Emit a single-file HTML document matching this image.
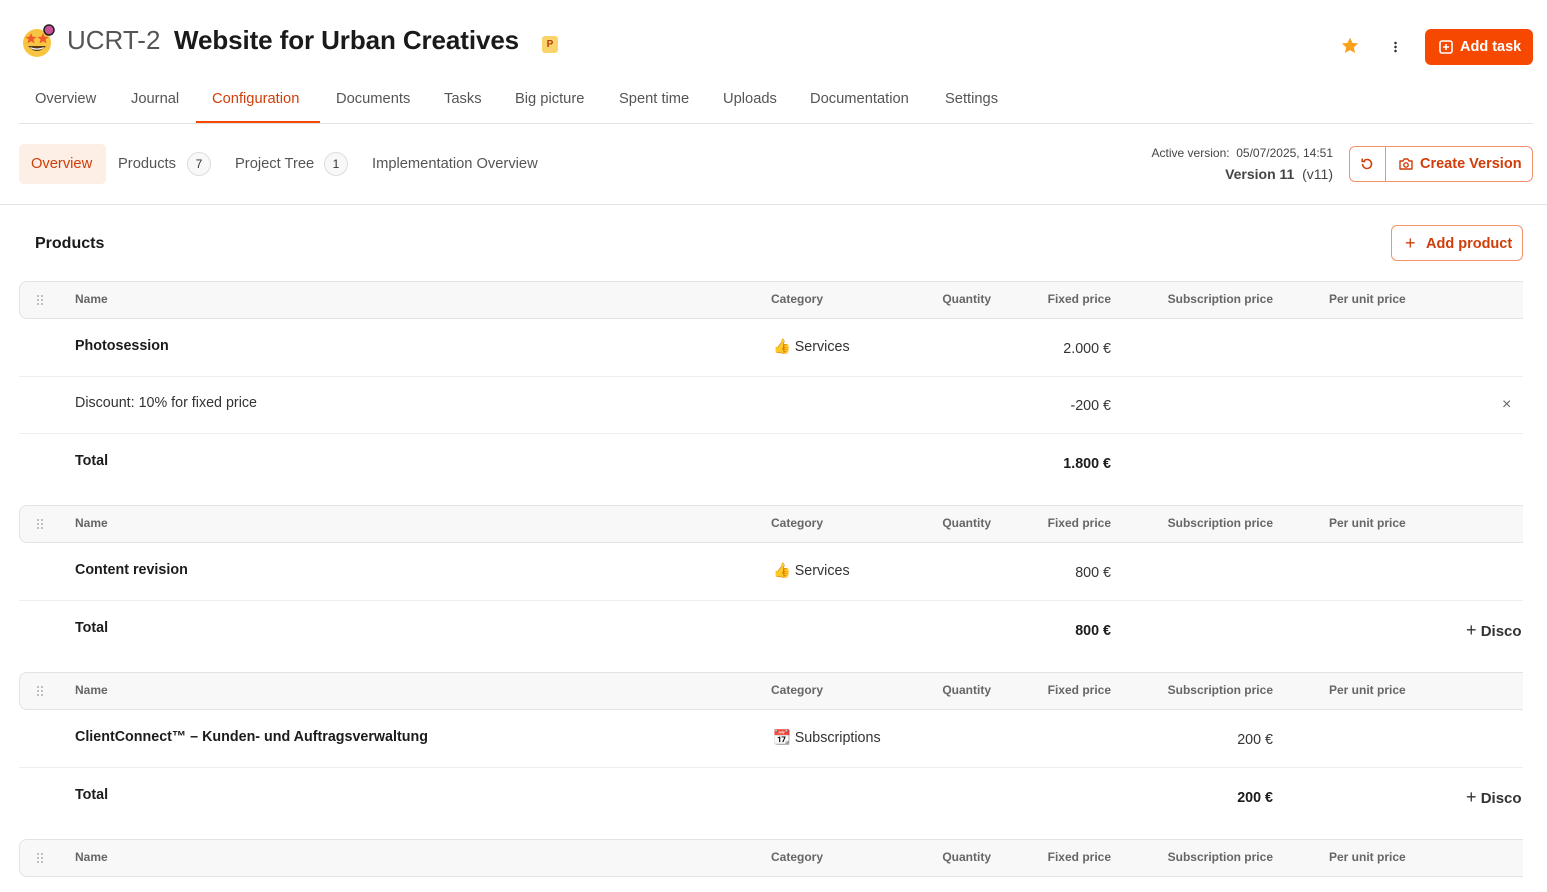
<!DOCTYPE html>
<html><head><meta charset="utf-8"><style>
*{margin:0;padding:0;box-sizing:border-box}
body{width:1547px;height:892px;overflow:hidden;background:#fff;font-family:"Liberation Sans",Arial,sans-serif;color:#222;position:relative}
.a{position:absolute;white-space:nowrap}
.tab{font-size:14.7px;color:#555;top:91px}
.th{background:#f8f8f8;border:1px solid #e3e3e3;border-right:none;border-radius:8px 0 0 8px;left:19px;width:1504px;height:38px}
.hl{font-size:12px;font-weight:bold;color:#666}
.line{left:19px;width:1504px;height:1px;background:#eee}
.b{font-size:14.3px;font-weight:bold;color:#1c1c1c}
.n{font-size:14.3px;color:#333}
.r{text-align:right}
.dots{width:8px;height:12px;background-image:radial-gradient(circle,#bbb 1px,transparent 1.2px);background-size:4px 4px}
</style></head><body>

<svg class="a" style="left:20px;top:24px" width="38" height="36" viewBox="0 0 38 36">
<circle cx="17" cy="19" r="14" fill="#f7c542"/>
<path d="M8 22 Q17 32 26 22 Z" fill="#5a3b1a"/>
<path d="M10 23 Q17 26 24 23 L23 24.5 Q17 27 11 24.5Z" fill="#fff"/>
<polygon points="11,9 12.6,12.8 16.6,13 13.4,15.5 14.6,19.4 11,17.2 7.4,19.4 8.6,15.5 5.4,13 9.4,12.8" fill="#ef5a2a"/>
<polygon points="23,9 24.6,12.8 28.6,13 25.4,15.5 26.6,19.4 23,17.2 19.4,19.4 20.6,15.5 17.4,13 21.4,12.8" fill="#ef5a2a"/>
<circle cx="29" cy="6" r="5" fill="#c9509b" stroke="#222" stroke-width="1.5"/>
</svg>
<div class="a" style="left:67px;top:25px;font-size:26px;color:#555">UCRT-2</div>
<div class="a" style="left:174px;top:25px;font-size:26px;font-weight:bold;color:#1a1a1a;letter-spacing:-0.1px">Website for Urban Creatives</div>
<div class="a" style="left:542px;top:36px;width:16px;height:17px;border-radius:3px;background:#fbd36b;color:#b5400e;font-size:10px;font-weight:bold;text-align:center;line-height:17px">P</div>

<svg class="a" style="left:1340px;top:36px" width="20" height="20" viewBox="0 0 24 24"><path d="M12 2l2.9 6.3 6.9.7-5.2 4.6 1.5 6.8L12 16.9 5.9 20.4l1.5-6.8L2.2 9l6.9-.7z" fill="#f9a11b"/></svg>
<div class="a" style="left:1394px;top:41px;width:3px;height:12px;background-image:radial-gradient(circle,#333 1.2px,transparent 1.4px);background-size:3px 4px"></div>
<div class="a" style="left:1425px;top:29px;width:108px;height:36px;background:#f64800;border-radius:6px;color:#fff;font-weight:bold;font-size:14.5px;line-height:36px;padding-left:35px">Add task</div>
<svg class="a" style="left:1439px;top:40px" width="14" height="14" viewBox="0 0 14 14"><rect x="1" y="1" width="12" height="12" rx="2" fill="none" stroke="#fff" stroke-width="1.6"/><path d="M7 4v6M4 7h6" stroke="#fff" stroke-width="1.6"/></svg>

<div class="a tab" style="left:35px">Overview</div>
<div class="a tab" style="left:131px">Journal</div>
<div class="a tab" style="left:212px;color:#d03d08">Configuration</div>
<div class="a tab" style="left:336px">Documents</div>
<div class="a tab" style="left:444px">Tasks</div>
<div class="a tab" style="left:515px">Big picture</div>
<div class="a tab" style="left:619px">Spent time</div>
<div class="a tab" style="left:723px">Uploads</div>
<div class="a tab" style="left:810px">Documentation</div>
<div class="a tab" style="left:945px">Settings</div>
<div class="a" style="left:19px;top:123px;width:1514px;height:1px;background:#e3e3e3"></div>
<div class="a" style="left:196px;top:121px;width:124px;height:2px;background:#f64800"></div>

<div class="a" style="left:19px;top:144px;width:87px;height:40px;background:#fdeee6;border-radius:5px"></div>
<div class="a" style="left:31px;top:156px;font-size:14.7px;color:#d03d08">Overview</div>
<div class="a" style="left:118px;top:156px;font-size:14.7px;color:#555">Products</div>
<div class="a" style="left:187px;top:152px;width:24px;height:24px;border:1px solid #ddd;border-radius:12px;background:#f8f8f8;font-size:12px;text-align:center;line-height:22px;color:#333">7</div>
<div class="a" style="left:235px;top:156px;font-size:14.7px;color:#555">Project Tree</div>
<div class="a" style="left:324px;top:152px;width:24px;height:24px;border:1px solid #ddd;border-radius:12px;background:#f8f8f8;font-size:12px;text-align:center;line-height:22px;color:#333">1</div>
<div class="a" style="left:372px;top:156px;font-size:14.7px;color:#555">Implementation Overview</div>

<div class="a r" style="left:1100px;width:233px;top:146px;font-size:12px;color:#444">Active version:&nbsp; 05/07/2025, 14:51</div>
<div class="a r" style="left:1100px;width:233px;top:166px;font-size:14px;color:#444"><b>Version 11</b>&nbsp; (v11)</div>
<div class="a" style="left:1349px;top:146px;width:184px;height:36px;border:1px solid #f5926a;border-radius:6px"></div>
<div class="a" style="left:1385px;top:146px;width:1px;height:36px;background:#f5926a"></div>
<svg class="a" style="left:1359px;top:156px" width="16" height="16" viewBox="0 0 16 16"><path d="M3.5 8a4.5 4.5 0 1 0 1.4-3.3" fill="none" stroke="#d03d08" stroke-width="1.5"/><path d="M3.2 2.5v3h3" fill="none" stroke="#d03d08" stroke-width="1.5"/></svg>
<svg class="a" style="left:1398px;top:156px" width="16" height="16" viewBox="0 0 16 16"><path d="M2 5h3l1.2-2h3.6L11 5h3v8H2z" fill="none" stroke="#d03d08" stroke-width="1.4" stroke-linejoin="round"/><circle cx="8" cy="9" r="2.2" fill="none" stroke="#d03d08" stroke-width="1.4"/></svg>
<div class="a" style="left:1420px;top:156px;font-size:14.5px;font-weight:bold;color:#d03d08">Create Version</div>
<div class="a" style="left:0;top:204px;width:1547px;height:1px;background:#e3e3e3"></div>

<div class="a" style="left:35px;top:235px;font-size:16px;font-weight:bold;color:#1a1a1a">Products</div>
<div class="a" style="left:1391px;top:225px;width:132px;height:36px;border:1px solid #f5926a;border-radius:6px"></div>
<div class="a" style="left:1405px;top:233px;font-size:18px;color:#d03d08">+</div>
<div class="a" style="left:1426px;top:236px;font-size:14.5px;font-weight:bold;color:#d03d08">Add product</div>

<div class="a th" style="top:281px"></div>
<div class="a dots" style="left:36px;top:294px"></div>
<div class="a hl" style="left:75px;top:292px">Name</div>
<div class="a hl" style="left:771px;top:292px">Category</div>
<div class="a hl r" style="left:900px;width:91px;top:292px">Quantity</div>
<div class="a hl r" style="left:1000px;width:111px;top:292px">Fixed price</div>
<div class="a hl r" style="left:1140px;width:133px;top:292px">Subscription price</div>
<div class="a hl" style="left:1329px;top:292px">Per unit price</div>

<div class="a b" style="left:75px;top:338px">Photosession</div>
<div class="a n" style="left:773px;top:339px">👍 Services</div>
<div class="a n r" style="left:1000px;width:111px;top:341px">2.000 €</div>
<div class="a line" style="top:376px"></div>
<div class="a n" style="left:75px;top:395px">Discount: 10% for fixed price</div>
<div class="a n r" style="left:1000px;width:111px;top:398px">-200 €</div>
<div class="a" style="left:1502px;top:396px;font-size:16px;color:#666">×</div>
<div class="a line" style="top:433px"></div>
<div class="a b" style="left:75px;top:453px">Total</div>
<div class="a b r" style="left:1000px;width:111px;top:456px">1.800 €</div>

<div class="a th" style="top:505px"></div>
<div class="a dots" style="left:36px;top:518px"></div>
<div class="a hl" style="left:75px;top:516px">Name</div>
<div class="a hl" style="left:771px;top:516px">Category</div>
<div class="a hl r" style="left:900px;width:91px;top:516px">Quantity</div>
<div class="a hl r" style="left:1000px;width:111px;top:516px">Fixed price</div>
<div class="a hl r" style="left:1140px;width:133px;top:516px">Subscription price</div>
<div class="a hl" style="left:1329px;top:516px">Per unit price</div>

<div class="a b" style="left:75px;top:562px">Content revision</div>
<div class="a n" style="left:773px;top:563px">👍 Services</div>
<div class="a n r" style="left:1000px;width:111px;top:565px">800 €</div>
<div class="a line" style="top:600px"></div>
<div class="a b" style="left:75px;top:620px">Total</div>
<div class="a b r" style="left:1000px;width:111px;top:623px">800 €</div>
<div class="a" style="left:1466px;top:620px;font-size:15px;color:#333"><span style="font-size:18px">+</span> <b>Disco</b></div>

<div class="a th" style="top:672px"></div>
<div class="a dots" style="left:36px;top:685px"></div>
<div class="a hl" style="left:75px;top:683px">Name</div>
<div class="a hl" style="left:771px;top:683px">Category</div>
<div class="a hl r" style="left:900px;width:91px;top:683px">Quantity</div>
<div class="a hl r" style="left:1000px;width:111px;top:683px">Fixed price</div>
<div class="a hl r" style="left:1140px;width:133px;top:683px">Subscription price</div>
<div class="a hl" style="left:1329px;top:683px">Per unit price</div>

<div class="a b" style="left:75px;top:729px">ClientConnect™ – Kunden- und Auftragsverwaltung</div>
<div class="a n" style="left:773px;top:730px">📆 Subscriptions</div>
<div class="a n r" style="left:1140px;width:133px;top:732px">200 €</div>
<div class="a line" style="top:767px"></div>
<div class="a b" style="left:75px;top:787px">Total</div>
<div class="a b r" style="left:1140px;width:133px;top:790px">200 €</div>
<div class="a" style="left:1466px;top:787px;font-size:15px;color:#333"><span style="font-size:18px">+</span> <b>Disco</b></div>

<div class="a th" style="top:839px"></div>
<div class="a dots" style="left:36px;top:852px"></div>
<div class="a hl" style="left:75px;top:850px">Name</div>
<div class="a hl" style="left:771px;top:850px">Category</div>
<div class="a hl r" style="left:900px;width:91px;top:850px">Quantity</div>
<div class="a hl r" style="left:1000px;width:111px;top:850px">Fixed price</div>
<div class="a hl r" style="left:1140px;width:133px;top:850px">Subscription price</div>
<div class="a hl" style="left:1329px;top:850px">Per unit price</div>
</body></html>
